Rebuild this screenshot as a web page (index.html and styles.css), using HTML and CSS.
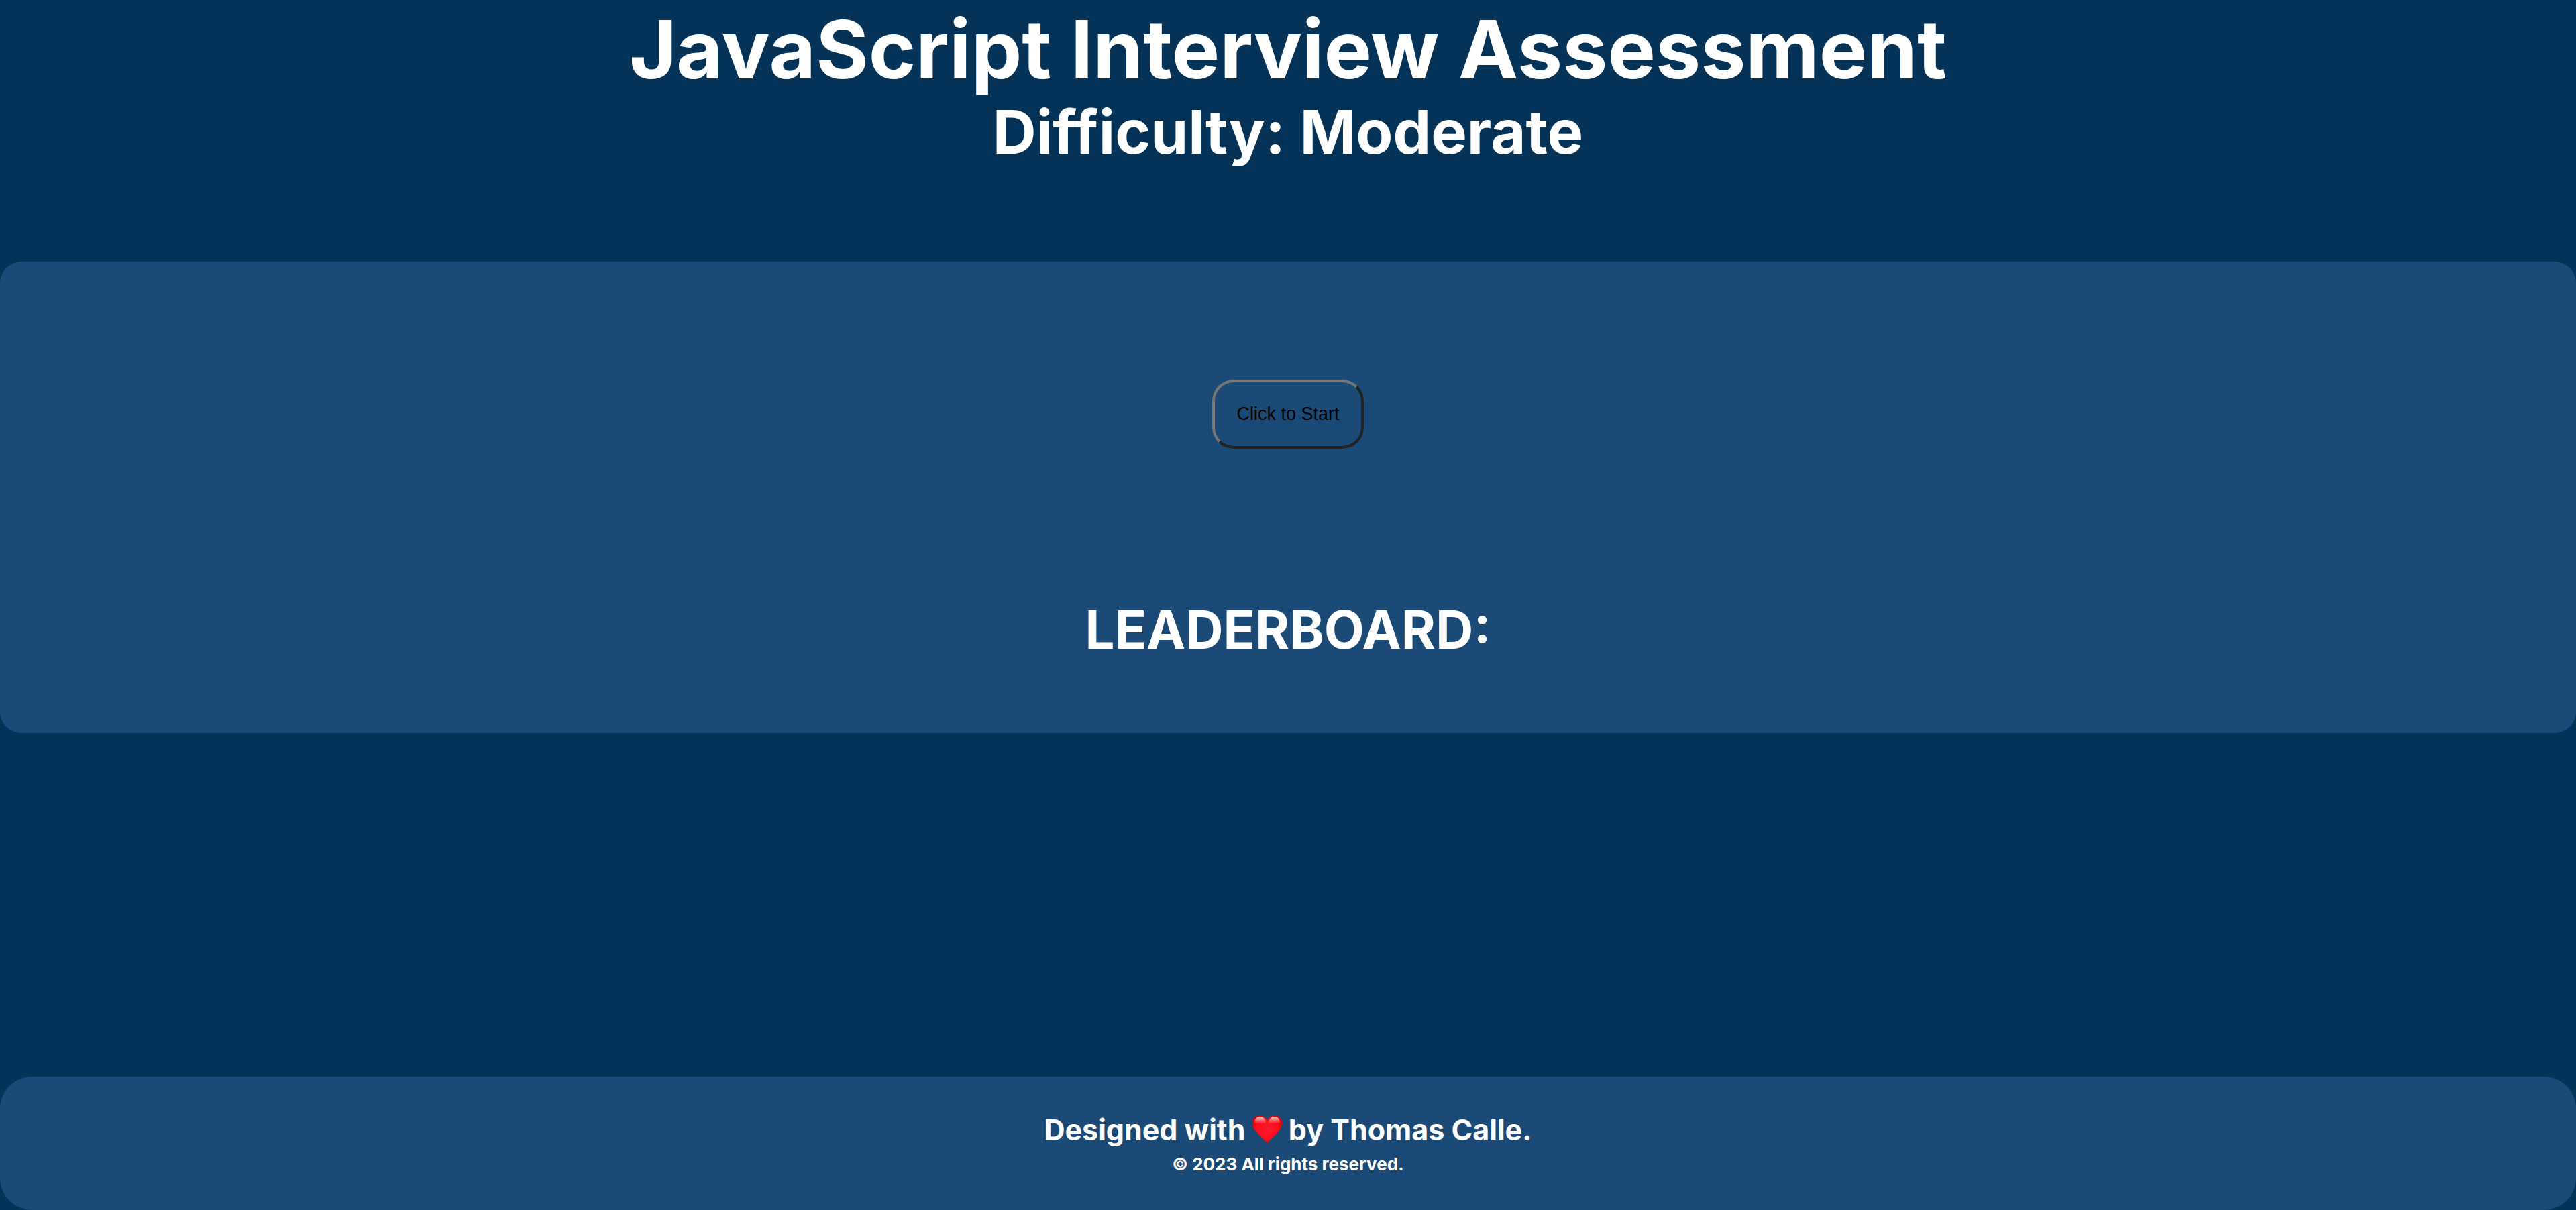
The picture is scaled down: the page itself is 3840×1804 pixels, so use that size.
FILE: index.html
```html
<!DOCTYPE html>
<html lang="en">
<head>
  <meta charset="utf-8">
  <meta name="viewport" content="width=device-width, initial-scale=1">
  <title>JavaScript Interview Assessment</title>
  <link rel="stylesheet" href="styles.css">
</head>
<body>
  <header class="header">
    <h1 class="title">JavaScript Interview Assessment</h1>
    <h2 class="subtitle">Difficulty: Moderate</h2>
  </header>
  <main class="quiz">
    <button class="start" type="button">Click to Start</button>
    <h2 class="leaderboard">LEADERBOARD:</h2>
  </main>
  <footer class="footer">
    <p class="credit">Designed with
      <svg class="heart" viewBox="0 0 44 44" role="img" aria-label="love">
        <defs>
          <radialGradient id="heart-fill" cx="50%" cy="48%" r="58%">
            <stop offset="0" stop-color="#ff1a2c"/>
            <stop offset="0.65" stop-color="#fc0d18"/>
            <stop offset="1" stop-color="#d80000"/>
          </radialGradient>
          <linearGradient id="heart-shine" x1="0" y1="0" x2="0" y2="1">
            <stop offset="0" stop-color="#fff" stop-opacity="0.8"/>
            <stop offset="1" stop-color="#fff" stop-opacity="0"/>
          </linearGradient>
        </defs>
        <path fill="url(#heart-fill)" d="M22 43C20 39 14 34 8 28C3 23 0 18 0 12C0 5 5 1 11 1C16 1 20 4 22 9C24 4 28 1 33 1C39 1 44 5 44 12C44 18 41 23 36 28C30 34 24 39 22 43Z"/>
        <path fill="url(#heart-shine)" d="M3 12C3 6 7 3 11 3C16 3 19 6 20 12C15 14 8 14 3 12ZM24 12C25 6 28 3 33 3C37 3 41 6 41 12C36 14 29 14 24 12Z"/>
      </svg>
      by Thomas Calle.</p>
    <p class="rights">© 2023 All rights reserved.</p>
  </footer>
</body>
</html>
```
FILE: styles.css
```css
* {
  box-sizing: border-box;
  margin: 0;
  padding: 0;
}

body {
  display: flex;
  flex-direction: column;
  min-height: 100vh;
  background: #043357;
  color: #fff;
  font-family: Inter, "Liberation Sans", sans-serif;
  font-weight: 700;
  text-align: center;
}

.header {
  padding-bottom: 144px;
}

.title {
  font-size: 120px;
  line-height: 148px;
}

.subtitle {
  font-size: 90px;
  line-height: 98px;
}

.quiz {
  display: flex;
  flex-direction: column;
  align-items: center;
  gap: 212px;
  padding: 176px 32px 96px;
  border-radius: 32px;
  background: #1a4a75;
}

.start {
  padding: 32px;
  border: 4px solid;
  border-color: #767676 #212121 #212121 #767676;
  border-radius: 32px;
  background: transparent;
  color: #000;
  font-family: "Liberation Sans", Arial, sans-serif;
  font-size: 27px;
  line-height: 31px;
}

.leaderboard {
  font-size: 78px;
  line-height: 116px;
}

.footer {
  margin-top: auto;
  padding: 48px 32px;
  border-radius: 48px;
  background: #1a4a75;
}

.credit {
  font-size: 43px;
  line-height: 62px;
}

.heart {
  width: 44px;
  height: 44px;
  vertical-align: -6px;
}

.rights {
  font-size: 26px;
  line-height: 41px;
}
```
